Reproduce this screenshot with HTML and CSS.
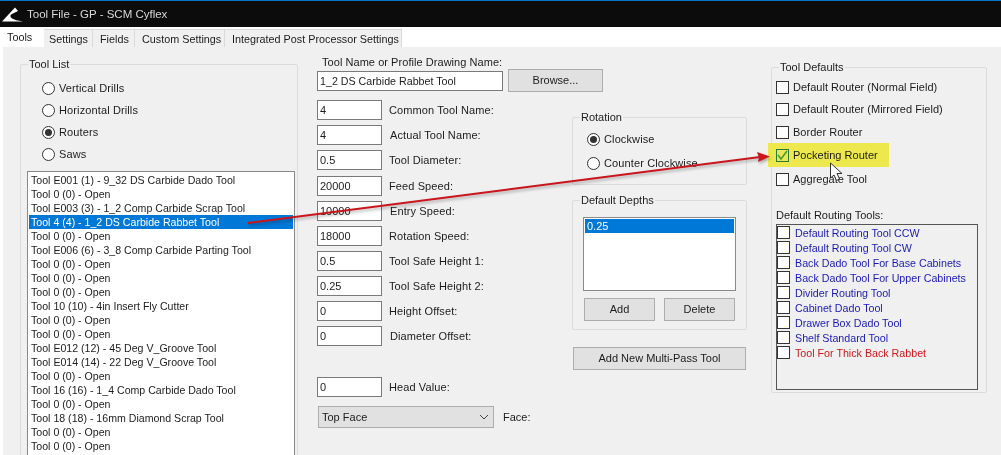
FILE: index.html
```html
<!DOCTYPE html>
<html lang="en">
<head>
<meta charset="utf-8">
<title>Tool File - GP - SCM Cyflex</title>
<link rel="stylesheet" href="styles.css">
</head>
<body>
<div class="win">
  <header class="titlebar">
    <svg class="logo" width="24" height="16" viewBox="0 0 24 16"><path d="M2 15.5 L15 1.5 L18 5 L11 8.5 C9 11 12 14 23 15.5 Z" fill="#fff"/></svg>
    <span>Tool File - GP - SCM Cyflex</span>
  </header>
  <nav class="tabs">
    <div class="tab active">Tools</div>
    <div class="tab t-settings">Settings</div>
    <div class="tab t-fields">Fields</div>
    <div class="tab t-custom">Custom Settings</div>
    <div class="tab t-post">Integrated Post Processor Settings</div>
  </nav>
  <main class="panel">
    <fieldset class="group toollist">
      <legend>Tool List</legend>
      <div class="radios">
        <div class="radio"><i class="rb"></i>Vertical Drills</div>
        <div class="radio"><i class="rb"></i>Horizontal Drills</div>
        <div class="radio"><i class="rb on"></i>Routers</div>
        <div class="radio"><i class="rb"></i>Saws</div>
      </div>
      <div class="listbox tools">
        <div>Tool E001 (1) - 9_32 DS Carbide Dado Tool</div>
        <div>Tool 0 (0) - Open</div>
        <div>Tool E003 (3) - 1_2 Comp Carbide Scrap Tool</div>
        <div class="sel">Tool 4 (4) - 1_2 DS Carbide Rabbet Tool</div>
        <div>Tool 0 (0) - Open</div>
        <div>Tool E006 (6) - 3_8 Comp Carbide Parting Tool</div>
        <div>Tool 0 (0) - Open</div>
        <div>Tool 0 (0) - Open</div>
        <div>Tool 0 (0) - Open</div>
        <div>Tool 10 (10) - 4in Insert Fly Cutter</div>
        <div>Tool 0 (0) - Open</div>
        <div>Tool 0 (0) - Open</div>
        <div>Tool E012 (12) - 45 Deg V_Groove Tool</div>
        <div>Tool E014 (14) - 22 Deg V_Groove Tool</div>
        <div>Tool 0 (0) - Open</div>
        <div>Tool 16 (16) - 1_4 Comp Carbide Dado Tool</div>
        <div>Tool 0 (0) - Open</div>
        <div>Tool 18 (18) - 16mm Diamond Scrap Tool</div>
        <div>Tool 0 (0) - Open</div>
        <div>Tool 0 (0) - Open</div>
      </div>
    </fieldset>

    <section class="middle">
      <div class="namelabel">Tool Name or Profile Drawing Name:</div>
      <div class="namerow">
        <div class="input wide">1_2 DS Carbide Rabbet Tool</div>
        <div class="btn browse">Browse...</div>
      </div>
      <div class="lower">
        <div class="fields">
          <div class="field"><div class="input">4</div><label>Common Tool Name:</label></div>
          <div class="field"><div class="input">4</div><label class="in">Actual Tool Name:</label></div>
          <div class="field"><div class="input">0.5</div><label>Tool Diameter:</label></div>
          <div class="field extra"><div class="input">20000</div><label>Feed Speed:</label></div>
          <div class="field"><div class="input">10000</div><label class="in">Entry Speed:</label></div>
          <div class="field"><div class="input">18000</div><label>Rotation Speed:</label></div>
          <div class="field"><div class="input">0.5</div><label>Tool Safe Height 1:</label></div>
          <div class="field"><div class="input">0.25</div><label>Tool Safe Height 2:</label></div>
          <div class="field"><div class="input">0</div><label>Height Offset:</label></div>
          <div class="field"><div class="input">0</div><label class="in">Diameter Offset:</label></div>
          <div class="field head"><div class="input">0</div><label>Head Value:</label></div>
          <div class="facerow">
            <div class="select">Top Face
              <svg width="10" height="6" viewBox="0 0 10 6"><path d="M1 1 L5 5 L9 1" fill="none" stroke="#444" stroke-width="1"/></svg>
            </div>
            <label>Face:</label>
          </div>
        </div>
        <div class="side">
          <fieldset class="group rotation">
            <legend>Rotation</legend>
            <div class="radio"><i class="rb on"></i>Clockwise</div>
            <div class="radio"><i class="rb"></i>Counter Clockwise</div>
          </fieldset>
          <fieldset class="group depths">
            <legend>Default Depths</legend>
            <div class="listbox depthlist"><div class="sel">0.25</div></div>
            <div class="btnrow">
              <div class="btn small">Add</div>
              <div class="btn small">Delete</div>
            </div>
          </fieldset>
          <div class="btn multipass">Add New Multi-Pass Tool</div>
        </div>
      </div>
    </section>

    <fieldset class="group defaults">
      <legend>Tool Defaults</legend>
      <div class="check"><i class="cb"></i>Default Router (Normal Field)</div>
      <div class="check"><i class="cb"></i>Default Router (Mirrored Field)</div>
      <div class="check c3"><i class="cb"></i>Border Router</div>
      <div class="check hi"><i class="cb green"><svg width="13" height="13" viewBox="0 0 13 13"><path d="M2 6 L5 10 L11 2" fill="none" stroke="#3c9a28" stroke-width="1.4"/></svg></i>Pocketing Router</div>
      <div class="check c5"><i class="cb"></i>Aggregate Tool</div>
      <div class="routelabel">Default Routing Tools:</div>
      <div class="routes">
        <div class="route"><i class="cb"></i>Default Routing Tool CCW</div>
        <div class="route"><i class="cb"></i>Default Routing Tool CW</div>
        <div class="route"><i class="cb"></i>Back Dado Tool For Base Cabinets</div>
        <div class="route"><i class="cb"></i>Back Dado Tool For Upper Cabinets</div>
        <div class="route"><i class="cb"></i>Divider Routing Tool</div>
        <div class="route"><i class="cb"></i>Cabinet Dado Tool</div>
        <div class="route"><i class="cb"></i>Drawer Box Dado Tool</div>
        <div class="route"><i class="cb"></i>Shelf Standard Tool</div>
        <div class="route red"><i class="cb"></i>Tool For Thick Back Rabbet</div>
      </div>
    </fieldset>
  </main>

  <svg class="arrow" width="1001" height="455" viewBox="0 0 1001 455">
    <g class="arrowshadow">
      <path d="M248 223 L760 157" stroke="#c9151c" stroke-width="2" fill="none"/>
      <path d="M770 156.5 L757 152 L759 157.5 L758 162 Z" fill="#c9151c"/>
    </g>
    <path d="M830.5 163 L830.5 178 L834 175 L836.5 180.5 L839.5 179 L837 173.5 L842 173.5 Z" fill="#fff" stroke="#333" stroke-width="1"/>
  </svg>
</div>
</body>
</html>
```
FILE: styles.css
```css
* { box-sizing: border-box; }
html, body { margin: 0; padding: 0; background: #fff; }
body {
  font-family: "Liberation Sans", Arial, sans-serif;
  font-size: 11px;
  color: #1c1c1c;
}
.win {
  position: relative;
  width: 1001px;
  height: 455px;
  overflow: hidden;
  background: #fff;
  filter: blur(0.3px);
}
.titlebar {
  height: 27px;
  background: #0c0c0c;
  border-top: 1px solid #0a74c4;
  color: #d8d8d8;
  font-size: 11.5px;
  display: flex;
  align-items: center;
}
.logo { margin: 0 3px 0 0; }
.tabs {
  display: flex;
  height: 20px;
  align-items: flex-end;
  background: #fff;
}
.tab {
  height: 18px;
  background: #f0f0f0;
  border: 1px solid #dadada;
  border-width: 1px 1px 0 0;
  padding-left: 6px;
  line-height: 18px;
  font-size: 10.8px;
  white-space: nowrap;
}
.tab.active {
  width: 44px;
  height: 20px;
  background: #fff;
  border: 0;
  padding-left: 7px;
  line-height: 20px;
}
.t-settings { width: 49px; padding-left: 5px; }
.t-fields { width: 42px; padding-left: 7px; }
.t-custom { width: 90px; padding-left: 7px; }
.t-post { width: 177px; padding-left: 7px; }
.panel {
  height: 408px;
  margin-left: 3px;
  background: #f0f0f0;
  display: flex;
  align-items: flex-start;
}
.group {
  margin: 0;
  padding: 0;
  min-width: 0;
  border: 1px solid #dcdcdc;
  border-radius: 2px;
}
.group legend {
  margin-left: 7px;
  padding: 0 1px;
  line-height: 13px;
  height: 13px;
}
.toollist {
  width: 278px;
  height: 420px;
  margin: 11px 0 0 17px;
  padding-top: 6px;
}
.radios { margin: 0 0 6px 6px; }
.radio {
  height: 22px;
  padding-left: 15px;
  display: flex;
  align-items: center;
  letter-spacing: 0.12px;
}
.rb {
  flex: none;
  width: 13px;
  height: 13px;
  margin-right: 4px;
  border: 1px solid #333;
  border-radius: 50%;
  background: #fff;
  display: flex;
  align-items: center;
  justify-content: center;
}
.rb.on::after {
  content: "";
  width: 7px;
  height: 7px;
  border-radius: 50%;
  background: #333;
}
.listbox {
  background: #fff;
  border: 1px solid #8a8a8a;
}
.tools {
  width: 268px;
  height: 290px;
  margin-left: 6px;
  padding: 1px;
}
.tools div {
  height: 14px;
  line-height: 14px;
  padding-left: 2px;
  font-size: 10.6px;
  white-space: nowrap;
}
.sel {
  background: #0078d7;
  color: #fff;
}
.middle {
  width: 430px;
  margin: 9px 0 0 19px;
}
.namelabel {
  height: 13px;
  line-height: 13px;
  padding-left: 5px;
  letter-spacing: 0.05px;
}
.namerow {
  height: 23px;
  display: flex;
  align-items: center;
  gap: 5px;
}
.input {
  flex: none;
  width: 65px;
  height: 20px;
  line-height: 18px;
  padding-left: 2px;
  background: #fff;
  border: 1px solid #7a7a7a;
  white-space: nowrap;
}
.input.wide { width: 186px; font-size: 10.7px; }
.btn {
  background: #e1e1e1;
  border: 1px solid #adadad;
  text-align: center;
}
.browse {
  width: 95px;
  height: 23px;
  line-height: 20px;
}
.lower {
  display: flex;
  margin-top: 8px;
}
.fields {
  width: 255px;
  flex: none;
  display: flex;
  flex-direction: column;
  gap: 5px;
}
.field {
  display: flex;
  align-items: center;
  height: 20px;
}
.field.extra { margin-top: 1px; }
.field.head { margin-top: 26px; }
.field label { margin-left: 7px; letter-spacing: 0.1px; }
.field label.in { margin-left: 8px; }
.facerow {
  display: flex;
  align-items: center;
  margin-top: 4px;
  padding-left: 1px;
}
.facerow label { margin-left: 9px; }
.select {
  width: 176px;
  height: 22px;
  line-height: 20px;
  padding: 0 4px 0 3px;
  background: #e1e1e1;
  border: 1px solid #adadad;
  display: flex;
  align-items: center;
  justify-content: space-between;
}
.side {
  width: 175px;
  margin-top: 11px;
}
.rotation {
  width: 175px;
  height: 74px;
  padding-top: 3px;
}
.rotation .radio {
  height: 24px;
  padding-left: 14px;
}
.depths {
  width: 175px;
  height: 136px;
  margin-top: 9px;
  padding-top: 10px;
}
.depthlist {
  width: 153px;
  height: 74px;
  margin-left: 10px;
  padding: 1px;
}
.depthlist .sel {
  height: 14px;
  line-height: 14px;
  padding-left: 2px;
}
.btnrow {
  display: flex;
  gap: 9px;
  margin: 7px 0 0 11px;
}
.small {
  width: 71px;
  height: 23px;
  line-height: 21px;
}
.multipass {
  width: 173px;
  height: 23px;
  line-height: 21px;
  margin: 17px 0 0 1px;
}
.defaults {
  width: 216px;
  height: 332px;
  margin: 14px 0 0 24px;
  padding-top: 2px;
}
.check {
  height: 22px;
  margin-left: 4px;
  display: flex;
  align-items: center;
  letter-spacing: 0.02px;
}
.cb {
  flex: none;
  width: 13px;
  height: 13px;
  margin-right: 4px;
  background: #fff;
  border: 1px solid #333;
  display: block;
}
.cb svg { display: block; margin: -1px; }
.cb.green { border-color: #2f7a33; background: #e9e65a; }
.check.c3 { margin-top: 1px; }
.check.hi {
  height: 24px;
  width: 121px;
  margin: 0 0 0 -4px;
  padding-left: 8px;
  background: #ece84e;
}
.check.c5 { margin-top: 1px; }
.routelabel {
  height: 13px;
  line-height: 13px;
  margin: 19px 0 0 4px;
}
.routes {
  width: 202px;
  height: 166px;
  margin: 2px 0 0 4px;
  border: 1px solid #555;
}
.route {
  height: 15px;
  display: flex;
  align-items: center;
  font-size: 10.7px;
  color: #1a1ab4;
  white-space: nowrap;
}
.route .cb { margin-right: 5px; }
.route.red { color: #cc1a1a; }
.arrow {
  position: absolute;
  left: 0;
  top: 0;
  pointer-events: none;
}
.arrowshadow { filter: drop-shadow(1px 2px 1.5px rgba(0,0,0,.3)); }
```
